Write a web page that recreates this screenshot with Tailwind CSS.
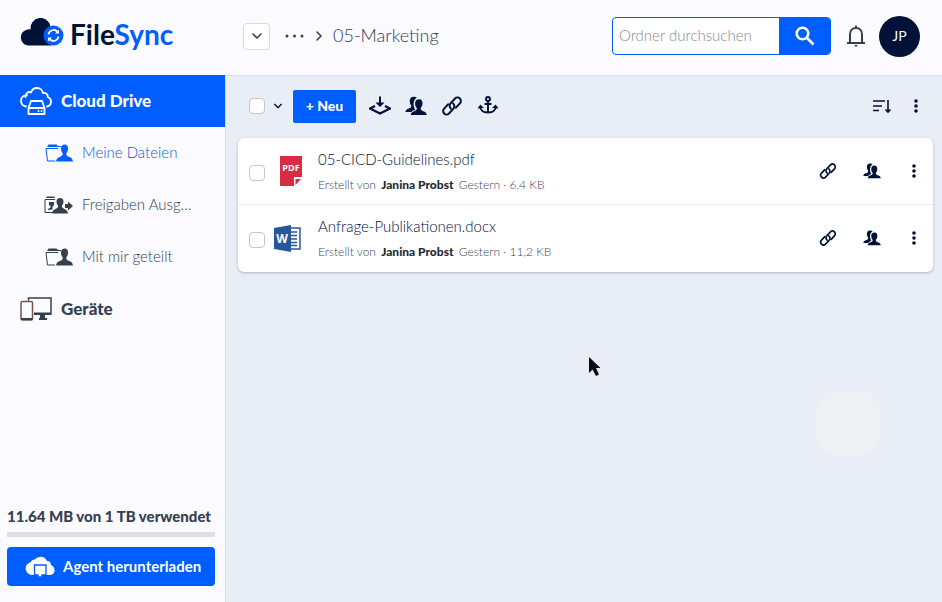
<!DOCTYPE html>
<html lang="de">
<head>
<meta charset="utf-8">
<meta name="viewport" content="width=device-width, initial-scale=1">
<title>FileSync</title>
<script src="https://cdn.jsdelivr.net/npm/@tailwindcss/browser@4"></script>
</head>
<body class="flex h-screen flex-col overflow-hidden bg-[#fafaff] font-['Lato',sans-serif] text-[#35404e]">
<svg class="hidden" aria-hidden="true">
  <symbol id="link" viewBox="0 0 24 24"><g fill="none" stroke="currentColor" stroke-width="2.200" stroke-linecap="round"><path d="M10.800 14.800a4 4 0 0 1-.4-5.700l4.900-5.300a3.700 3.700 0 0 1 5.300 5.300L16.300 13.800"/><path d="M13.200 9.200a4 4 0 0 1 .4 5.700l-4.900 5.300a3.700 3.700 0 0 1-5.300-5.300L7.700 10.200"/></g></symbol>
  <symbol id="people" viewBox="0 0 24 22"><path fill="currentColor" d="M9.500 1C6.500 1 5 3 5.200 6c.1 2 .8 3.500 1.700 4.500 0 2-.4 2.500-3.400 3.600C1.500 14.900.7 16 .5 17.500h6.500c1-1.300 2.600-2 4.300-2.500-2-3-2.900-8-.3-11.500.6-.8 1.200-1.200 2-1.500C12 1.200 11 1 9.500 1Z"/><path fill="currentColor" d="M15.500 3.500c-3 0-4.800 2-4.500 5 .1 2.200.9 3.800 1.900 4.800 0 2.200-.5 2.700-3.500 3.700-2 .7-2.900 2-3.100 3.800h17.400c-.2-1.800-1.100-3.100-3.100-3.800-3-1-3.500-1.500-3.500-3.700 1-1 1.800-2.600 2-4.800.2-3-1-5-3.600-5Z"/></symbol>
  <symbol id="dots" viewBox="0 0 6 16"><g fill="currentColor"><circle cx="3" cy="3" r="1.800"/><circle cx="3" cy="8" r="1.800"/><circle cx="3" cy="13" r="1.800"/></g></symbol>
  <symbol id="chevron" viewBox="0 0 12 12"><path d="m2 4 4 4 4-4" fill="none" stroke="currentColor" stroke-width="1.600" stroke-linecap="round" stroke-linejoin="round"/></symbol>
  <symbol id="user-folder" viewBox="0 0 28 18"><path d="M10 17H2.500L1 4.500h12" fill="none" stroke="currentColor"/><path d="m2 3 1.500-2.500h8L13 2h3V3H2Z" fill="currentColor"/><path d="M20 .5c-2.700 0-4.200 1.700-4 4.400.1 2 .8 3.500 1.700 4.400.1 2.200-.6 2.900-3 3.600-2.300.7-3.300 2-3.700 4.600h17c-.4-2.600-1.400-3.900-3.700-4.600-2.400-.7-3.100-1.400-3-3.600.9-.9 1.600-2.400 1.700-4.400.2-2.700-1.300-4.400-3-4.400Z" fill="currentColor"/></symbol>
</svg>

<header class="flex h-[75px] shrink-0 items-center pr-[22px] pb-[3px]">
  <a href="#" aria-label="FileSync" class="flex w-[243px] shrink-0 items-center gap-1 pb-1 pl-5">
    <svg class="h-8 w-[46px]" viewBox="0 0 46 32" aria-hidden="true">
      <path d="M8 27.500A8 8 0 0 1 6 12.100c1.500-.8 3-.9 4.700-.7A10 10 0 0 1 30.500 8.500c1 2 1 3 1 5v14Z" fill="#001238"/>
      <circle cx="33.500" cy="17.500" r="10" fill="#005dff"/>
      <g fill="none" stroke="#fff" stroke-width="1.800"><path d="M28.500 16.300a5.200 5.200 0 0 1 9-2.500"/><path d="M38.500 18.700a5.200 5.200 0 0 1-9 2.500"/></g>
      <path d="M39 11.500v4h-4ZM28 23.500v-4h4Z" fill="#fff"/>
    </svg>
    <span class="text-[28px] leading-9 font-bold text-[#001238]">File<span class="text-[#005dff]">Sync</span></span>
  </a>
  <nav aria-label="Pfad" class="flex flex-1 items-center">
    <button aria-label="Ordner wählen" class="flex h-[27px] w-[27px] items-center justify-center rounded border border-[#d9dae2] bg-white"><svg class="size-3"><use href="#chevron"/></svg></button>
    <button aria-label="Weitere Ordner" class="ml-[14px] flex h-6 w-[20px] items-center"><svg class="h-1 w-5" viewBox="0 0 20 4"><g fill="currentColor"><circle cx="3" cy="2" r="1.500"/><circle cx="10.500" cy="2" r="1.500"/><circle cx="18" cy="2" r="1.500"/></g></svg></button>
    <svg class="ml-[9px] size-3 -rotate-90" aria-hidden="true"><use href="#chevron"/></svg>
    <a href="#" class="ml-2 pb-[2px] text-lg font-light">05-Marketing</a>
  </nav>
  <form class="flex h-[38px] w-[219px] overflow-hidden rounded border border-[#005dff] bg-white">
    <input type="search" aria-label="Ordner durchsuchen" placeholder="Ordner durchsuchen" class="min-w-0 flex-1 px-[6px] pb-[2px] text-[15px] font-light outline-none placeholder:text-[#858991]">
    <button type="button" aria-label="Suchen" class="flex w-[51px] items-center justify-center bg-[#005dff] text-white"><svg class="size-5" viewBox="0 0 20 20" fill="none" stroke="currentColor" stroke-width="2.600"><circle cx="7.500" cy="7.500" r="5.800"/><path d="m12 12 6.500 6.500"/></svg></button>
  </form>
  <button aria-label="Benachrichtigungen" class="ml-[15px] flex h-8 w-5 items-center"><svg class="h-[22px] w-5" viewBox="0 0 20 22" fill="none" stroke="currentColor" stroke-width="2"><path d="M1 18h18M4 18V9.500C4 5.500 6.500 3 10 3s6 2.500 6 6.500V18"/><path d="M10 3V.5"/><path d="M8 20h4l-2 2Z" fill="currentColor" stroke="none"/></svg></button>
  <button aria-label="Konto JP" class="ml-[13px] size-[41px] rounded-full bg-[#001238] text-sm text-white">JP</button>
</header>

<div class="flex min-h-0 flex-1">
  <aside class="flex w-[226px] shrink-0 flex-col border-r border-[#d8dce8]">
    <nav aria-label="Bereiche" class="flex flex-col">
      <a href="#" class="flex h-[52px] items-center gap-[9px] bg-[#005dff] pl-5 text-[17px] font-black text-white">
        <svg class="h-7 w-8" viewBox="0 0 32 28" fill="none" stroke="currentColor" stroke-width="1.800" stroke-linecap="round" stroke-linejoin="round"><path d="M6 19.500C3 19 1 16.800 1 13.800 1 10.500 3.500 8 7 8.300M5.500 10C5 6.500 8.500 4 11 5.500 12 2 15 1 17 1c3 0 5.500 2 5.800 5 3-.5 5.200 1 5 4 2 .8 3.200 2.500 3.200 4.500 0 2.500-1.500 4.500-4 5"/><path d="M11 14h11l2.500 7v6h-16v-6ZM8.500 21h16"/><path d="M18.500 24h.1M21.500 24h.1"/></svg>
        Cloud Drive</a>
      <a href="#" class="flex h-[52px] items-center gap-[9px] pl-[45px] text-[15px] font-light text-[#1659dc]"><svg class="h-[18px] w-7 shrink-0 text-[#005dff]"><use href="#user-folder"/></svg><span class="pb-[2px]">Meine Dateien</span></a>
      <a href="#" class="flex h-[52px] items-center gap-[9px] pl-[44px] text-[15px] font-light">
        <svg class="h-[18px] w-[29px] shrink-0" viewBox="0 0 29 18"><path d="M9 16.500H1V3.500h10" fill="none" stroke="currentColor"/><path d="M2 2 3 .5h7L11 2ZM5 6h5v3L8.500 11v2.500L4 14v-1l2.500-1.500V10L5 9Z" fill="currentColor"/><path d="M16 2c-2.400 0-3.600 1.400-3.500 3.800.1 1.800.7 3 1.500 3.800.1 2-.5 2.700-2.500 3.400C9.500 13.700 8.500 15 8 17.500h16c-.4-2.500-1.500-3.800-3.500-4.500s-2.600-1.400-2.500-3.400c.8-.8 1.400-2 1.500-3.800C19.600 3.400 18.400 2 16 2ZM21 8h3V5.500l5 4.500-5 4.500V12h-3Z" fill="currentColor"/></svg>
        <span class="pb-[2px] whitespace-nowrap">Freigaben Ausg…</span></a>
      <a href="#" class="flex h-[52px] items-center gap-[9px] pl-[45px] text-[15px] font-light"><svg class="h-[18px] w-7 shrink-0"><use href="#user-folder"/></svg><span class="pb-[2px]">Mit mir geteilt</span></a>
      <a href="#" class="flex h-[52px] items-center gap-[9px] pl-5 text-[17px] font-black">
        <svg class="h-6 w-8" viewBox="0 0 32 24" fill="none" stroke="currentColor" stroke-width="1.500"><path d="M8.500 3.500V1h22.500v16H14"/><path d="M14 15.500h17V18H14ZM20 18h5v3h2v2h-8v-2h1Z" fill="currentColor" stroke="none"/><rect x="1" y="4.500" width="11.500" height="18.500" rx="1.500" stroke="#74564d"/><path d="M1 21h11.500v2H1Z" fill="currentColor" stroke="none"/></svg>
        Geräte</a>
    </nav>
    <div class="mt-auto flex flex-col px-[7px] pb-4">
      <label for="quota" class="text-[15px] leading-5 font-black whitespace-nowrap">11.64 MB von 1 TB verwendet</label>
      <progress id="quota" value="0" max="1" class="mt-[6px] h-[5px] w-[208px] appearance-none bg-[#dfdee4] [&::-webkit-progress-bar]:bg-[#dfdee4]"></progress>
      <button class="mt-[10px] flex h-[39px] w-[208px] items-center gap-2 rounded-sm bg-[#005dff] pl-[18px] text-[15px] font-bold whitespace-nowrap text-white">
        <svg class="h-[22px] w-[30px]" viewBox="0 0 30 22"><path d="M7 19A6.500 6.500 0 0 1 5.500 6.200C7 4 8.500 3.500 10 3.500 13-.5 20-.5 22 5c2.500 0 4 1.500 4 4 5 2 5 9.500-1 10Z" fill="#fff"/><path d="M9.500 9h11.500v10h-4v2h-4v-2H9.500Z" fill="#fff" stroke="#005dff" stroke-width="1.300"/></svg>
        Agent herunterladen</button>
    </div>
  </aside>

  <main class="flex min-w-0 flex-1 flex-col border-t border-[#d8dce8] bg-[#e9edf5] pr-[9px] pl-3 text-[#001238]">
    <div class="flex h-[62px] items-center pr-[14px] pb-[2px] pl-[11px]">
      <input type="checkbox" aria-label="Alle auswählen" class="size-4 appearance-none rounded border border-[#c3c4cd] bg-white">
      <button aria-label="Auswahloptionen" class="ml-2 flex h-6 w-[10px] items-center"><svg class="size-[10px]"><use href="#chevron"/></svg></button>
      <button class="ml-[10px] h-[33px] w-[63px] rounded-xs bg-[#005dff] text-sm font-black text-white">+ Neu</button>
      <div class="ml-[13px] flex items-center gap-[14px]">
        <button aria-label="Herunterladen"><svg class="size-[22px]" viewBox="0 0 22 22"><path d="M6 11 1 13.500l10 5 10-5-5-2.500" fill="none" stroke="currentColor" stroke-width="2.300" stroke-linejoin="round"/><path d="M10 1.500h2v6h3.500l-4.500 4.500-4.500-4.500H10Z" fill="currentColor"/></svg></button>
        <button aria-label="Teilen"><svg class="size-[22px]"><use href="#people"/></svg></button>
        <button aria-label="Link"><svg class="size-[22px]"><use href="#link"/></svg></button>
        <button aria-label="Anker"><svg class="size-[22px]" viewBox="0 0 22 22" fill="none" stroke="currentColor" stroke-width="1.900"><circle cx="11" cy="4" r="2"/><path d="M11 6v11.500M7.500 9h7M3 11.500c.5 4 3.500 6 8 6s7.500-2 8-6"/><path d="m.5 13.500 2.800-4L7 13ZM21.500 13.500l-2.800-4-3.700 3.500Z" fill="currentColor" stroke="none"/></svg></button>
      </div>
      <button aria-label="Sortieren" class="ml-auto"><svg class="h-4 w-5" viewBox="0 0 20 16" fill="none" stroke="currentColor" stroke-width="1.600"><path d="M1 3h12M1 8h9M1 12.500h6M16 2v12M13.500 11.500 16 14l2.500-2.500"/></svg></button>
      <button aria-label="Weitere Aktionen" class="ml-[21px]"><svg class="h-4 w-[6px]"><use href="#dots"/></svg></button>
    </div>
    <ul class="overflow-hidden rounded-md bg-white shadow-[0_1px_3px_#001238]/25">
      <li class="flex h-[67px] items-center border-b border-[#e9ebf3] pr-4 pl-[11px]">
        <input type="checkbox" aria-label="05-CICD-Guidelines.pdf auswählen" class="mt-1 size-4 appearance-none rounded border border-[#c3c4cd] bg-white">
        <svg class="ml-[9px] h-[30px] w-7 shrink-0" viewBox="0 0 28 30"><path d="M6 0h22v21h-8v9H6ZM21.500 23H27l-5.500 6Z" fill="#d92b43"/><text x="17" y="15" text-anchor="middle" font-family="Open Sans, sans-serif" font-size="9" font-weight="700" fill="#fff">PDF</text></svg>
        <div class="ml-4 min-w-0 flex-1">
          <a href="#" class="block truncate text-[15px] leading-6 font-light">05-CICD-Guidelines.pdf</a>
          <p class="truncate pt-1 text-xs leading-5 font-light text-[#40465a]">Erstellt von <b class="mx-[2px] font-black text-[#242936]">Janina Probst</b> Gestern · 6,4 KB</p>
        </div>
        <button aria-label="Link"><svg class="size-[18px]"><use href="#link"/></svg></button>
        <button aria-label="Teilen" class="ml-[26px]"><svg class="size-[18px]"><use href="#people"/></svg></button>
        <button aria-label="Weitere Aktionen" class="ml-[30px]"><svg class="h-4 w-[6px]"><use href="#dots"/></svg></button>
      </li>
      <li class="flex h-[67px] items-center pr-4 pb-px pl-[11px]">
        <input type="checkbox" aria-label="Anfrage-Publikationen.docx auswählen" class="mt-1 size-4 appearance-none rounded border border-[#c3c4cd] bg-white">
        <svg class="ml-[9px] h-[27px] w-7 shrink-0" viewBox="0 0 28 27"><path d="M14 3h12v21H14" fill="#fff" stroke="#28569b" stroke-width="1.500"/><path d="M17 7h6M17 10.500h6M17 14h6M17 17.500h6M17 20.500h6" stroke="#28569b" stroke-width="1.500"/><path d="M0 3 17 0v27L0 24Z" fill="#28569b"/><text x="8" y="18" text-anchor="middle" font-family="Open Sans, sans-serif" font-size="12" font-weight="700" fill="#fff">W</text></svg>
        <div class="ml-4 min-w-0 flex-1">
          <a href="#" class="block truncate text-[15px] leading-6 font-light">Anfrage-Publikationen.docx</a>
          <p class="truncate pt-1 text-xs leading-5 font-light text-[#40465a]">Erstellt von <b class="mx-[2px] font-black text-[#242936]">Janina Probst</b> Gestern · 11,2 KB</p>
        </div>
        <button aria-label="Link"><svg class="size-[18px]"><use href="#link"/></svg></button>
        <button aria-label="Teilen" class="ml-[26px]"><svg class="size-[18px]"><use href="#people"/></svg></button>
        <button aria-label="Weitere Aktionen" class="ml-[30px]"><svg class="h-4 w-[6px]"><use href="#dots"/></svg></button>
      </li>
    </ul>
  </main>
</div>
<div class="pointer-events-none absolute top-[391px] left-[817px] h-[65px] w-[63px] rounded-[20px] bg-[#edf1f4]"></div>
<svg class="pointer-events-none absolute top-[357px] left-[589px] h-5 w-3" viewBox="0 0 12 20" aria-hidden="true"><path d="M0 0v16l3.500-3.500L7 19l3-1.500L7 11h4.500Z" fill="#080b12"/></svg>
</body>
</html>
